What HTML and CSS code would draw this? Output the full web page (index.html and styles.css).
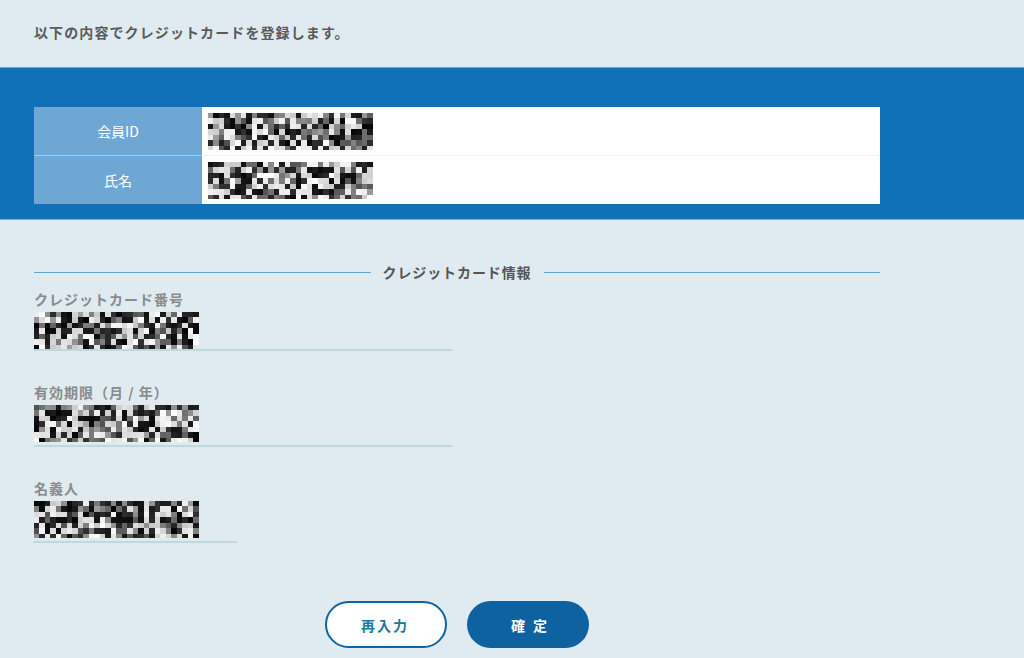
FILE: index.html
```html
<!DOCTYPE html>
<html>
  <head>
    <title>クレジットカード登録確認</title>
    <link rel="stylesheet" href="styles.css">
  </head>
  <body>
    <div class="intro">
      <p>以下の内容でクレジットカードを登録します。</p>
    </div>

    <div class="member-band">
      <table class="member-table">
        <tr>
          <th>会員ID</th>
          <td><canvas class="mosaic" data-seed="11"></canvas></td>
        </tr>
        <tr>
          <th>氏名</th>
          <td><canvas class="mosaic" data-seed="27"></canvas></td>
        </tr>
      </table>
    </div>

    <div class="card-section">
      <h2 class="section-title"><span>クレジットカード情報</span></h2>

      <div class="field">
        <label>クレジットカード番号</label>
        <canvas class="mosaic" data-seed="43"></canvas>
      </div>

      <div class="field">
        <label>有効期限（月 / 年）</label>
        <canvas class="mosaic" data-seed="59"></canvas>
      </div>

      <div class="field field-short">
        <label>名義人</label>
        <canvas class="mosaic" data-seed="71"></canvas>
      </div>

      <div class="buttons">
        <button class="btn btn-back">再入力</button>
        <button class="btn btn-submit">確定</button>
      </div>
    </div>

    <script src="script.js"></script>
  </body>
</html>
```

FILE: styles.css
```css
body {
  margin: 0;
  background-color: #e0ebf1;
  font-family: "Noto Sans CJK JP", "Noto Sans", sans-serif;
  font-size: 14px;
  color: #555;
}

.intro {
  height: 67px;
  box-sizing: border-box;
  padding: 22px 34px 0;
}

.intro p {
  margin: 0;
  line-height: 20px;
  font-weight: bold;
  letter-spacing: 1.1px;
  color: #5a5a5a;
}

.member-band {
  background-color: #1071b8;
  border-top: 1px solid #6ea6d6;
  border-bottom: 1px solid #7ab0dc;
  padding: 39px 144px 15px 34px;
}

.member-table {
  width: 100%;
  border-collapse: collapse;
}

.member-table th,
.member-table td {
  height: 48px;
  padding: 0;
}

.member-table tr + tr th {
  border-top: 1px solid #a9cce8;
}

.member-table tr + tr td {
  border-top: 1px solid #edf3f9;
}

.member-table th {
  width: 168px;
  background-color: #6fa7d4;
  color: #fff;
  font-weight: normal;
  text-align: center;
}

.member-table td {
  background-color: #fff;
  padding-left: 6px;
}

.member-table .mosaic {
  display: block;
}

.card-section {
  width: 846px;
  padding: 42px 34px 0;
}

.section-title {
  display: flex;
  align-items: center;
  gap: 12px;
  margin: 0;
  font-size: 14px;
  line-height: 20px;
  color: #555;
  letter-spacing: 0.9px;
}

.section-title::before,
.section-title::after {
  content: "";
  flex: 1;
  height: 1px;
  background-color: #62a4d6;
}

.field {
  width: 418px;
  margin-top: 31px;
  padding-bottom: 3px;
  border-bottom: 2px solid #c2d6dd;
}

.section-title + .field {
  margin-top: 7px;
  padding-bottom: 0;
}

.field-short {
  width: 203px;
}

.field label {
  display: block;
  line-height: 20px;
  margin-bottom: 3px;
  font-weight: bold;
  color: #8a8a8a;
  letter-spacing: 1px;
}

.field .mosaic {
  display: block;
}

.buttons {
  display: flex;
  justify-content: center;
  gap: 20px;
  margin-top: 58px;
}

.btn {
  width: 122px;
  height: 47px;
  border-radius: 24px;
  font-family: inherit;
  font-size: 14px;
  font-weight: bold;
  cursor: pointer;
}

.btn-back {
  background-color: #fff;
  border: 2px solid #1262a0;
  color: #1b7a9c;
  letter-spacing: 2px;
  padding-left: 4px;
}

.btn-submit {
  background-color: #0f62a0;
  border: none;
  color: #fff;
  letter-spacing: 8px;
  padding-left: 16px;
}
```

FILE: script.js
```js
// Pixelated placeholders for the masked values
const cell = 5.5;
const cols = 30;
const rows = 7;

document.querySelectorAll('.mosaic').forEach(function (canvas) {
  let seed = parseInt(canvas.getAttribute('data-seed'));
  const random = function () {
    seed = (seed * 9301 + 49297) % 233280;
    return seed / 233280;
  };

  canvas.width = Math.round(cols * cell);
  canvas.height = Math.round(rows * cell) - 2;
  const ctx = canvas.getContext('2d');

  for (let y = 0; y < rows; y++) {
    for (let x = 0; x < cols; x++) {
      const r = random();
      let v;
      if (r < 0.4) v = 5 + random() * 45;
      else if (r < 0.65) v = 80 + random() * 80;
      else v = 200 + random() * 55;
      v = Math.round(v);
      ctx.fillStyle = 'rgb(' + v + ',' + v + ',' + v + ')';
      ctx.fillRect(Math.floor(x * cell), Math.floor(y * cell), Math.ceil(cell), Math.ceil(cell));
    }
  }
});
```
